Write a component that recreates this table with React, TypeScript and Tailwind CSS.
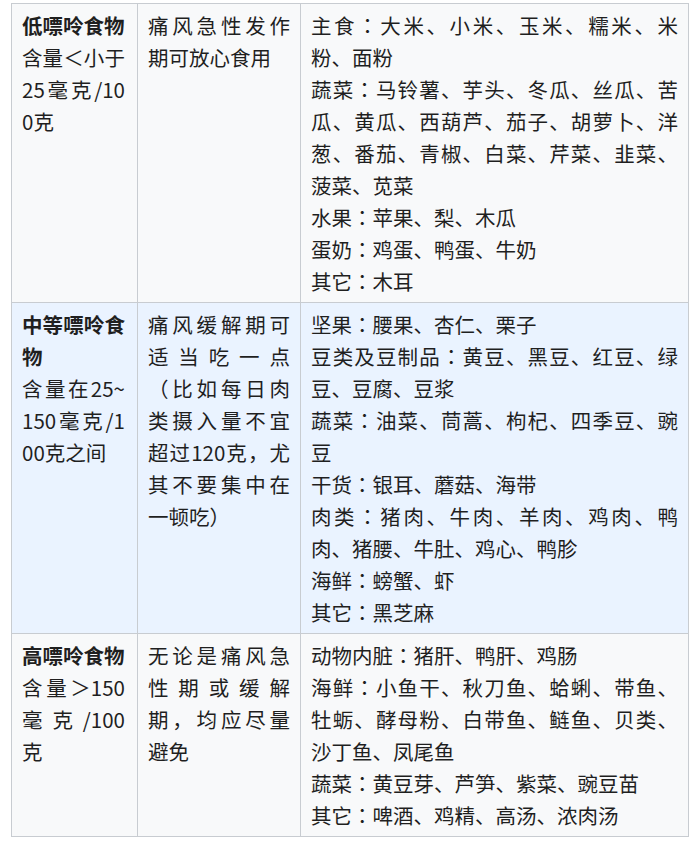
const rows = [
  {
    title: "低嘌呤食物",
    amount: "含量＜小于25毫克/100克",
    advice: "痛风急性发作期可放心食用",
    foods: [
      "主食：大米、小米、玉米、糯米、米粉、面粉",
      "蔬菜：马铃薯、芋头、冬瓜、丝瓜、苦瓜、黄瓜、西葫芦、茄子、胡萝卜、洋葱、番茄、青椒、白菜、芹菜、韭菜、菠菜、苋菜",
      "水果：苹果、梨、木瓜",
      "蛋奶：鸡蛋、鸭蛋、牛奶",
      "其它：木耳",
    ],
    bg: "bg-[#f8f9fa]",
  },
  {
    title: "中等嘌呤食物",
    amount: "含量在25~150毫克/100克之间",
    advice: "痛风缓解期可适当吃一点（比如每日肉类摄入量不宜超过120克，尤其不要集中在一顿吃）",
    foods: [
      "坚果：腰果、杏仁、栗子",
      "豆类及豆制品：黄豆、黑豆、红豆、绿豆、豆腐、豆浆",
      "蔬菜：油菜、茼蒿、枸杞、四季豆、豌豆",
      "干货：银耳、蘑菇、海带",
      "肉类：猪肉、牛肉、羊肉、鸡肉、鸭肉、猪腰、牛肚、鸡心、鸭胗",
      "海鲜：螃蟹、虾",
      "其它：黑芝麻",
    ],
    bg: "bg-[#eaf3ff]",
  },
  {
    title: "高嘌呤食物",
    amount: "含量＞150毫克/100克",
    advice: "无论是痛风急性期或缓解期，均应尽量避免",
    foods: [
      "动物内脏：猪肝、鸭肝、鸡肠",
      "海鲜：小鱼干、秋刀鱼、蛤蜊、带鱼、牡蛎、酵母粉、白带鱼、鲢鱼、贝类、沙丁鱼、凤尾鱼",
      "蔬菜：黄豆芽、芦笋、紫菜、豌豆苗",
      "其它：啤酒、鸡精、高汤、浓肉汤",
    ],
    bg: "bg-[#f8f9fa]",
  },
];

// centred full-width colon, like the reference font
function FoodLine({ text }: { text: string }) {
  const [head, rest] = text.split("：");
  return (
    <div>
      {head}
      <span className="font-['Noto_Sans_CJK_JP',sans-serif]">：</span>
      {rest}
    </div>
  );
}

export default function App() {
  return (
    <div className="min-h-[842px] bg-white pl-[11px] pt-[3px] font-['Noto_Sans_CJK_SC','Noto_Sans',sans-serif] text-[20.5px] leading-[32px] text-[#1f1f1f]">
      <table className="w-[677px] table-fixed border-collapse border border-[#c8ccd1]">
        <colgroup>
          <col className="w-[126px]" />
          <col className="w-[163px]" />
          <col className="w-[388px]" />
        </colgroup>
        <tbody>
          {rows.map((r) => (
            <tr key={r.title} className={r.bg}>
              <td className="border border-[#c8ccd1] pt-[5px] pb-[5px] pl-[10px] pr-[12px] align-top text-justify break-all">
                <div className="font-bold">{r.title}</div>
                <div>{r.amount}</div>
              </td>
              <td className="border border-[#c8ccd1] py-[5px] px-[10px] align-top text-justify">
                {r.advice}
              </td>
              <td className="border border-[#c8ccd1] py-[5px] px-[10px] align-top text-justify">
                {r.foods.map((f) => (
                  <FoodLine key={f} text={f} />
                ))}
              </td>
            </tr>
          ))}
        </tbody>
      </table>
    </div>
  );
}
